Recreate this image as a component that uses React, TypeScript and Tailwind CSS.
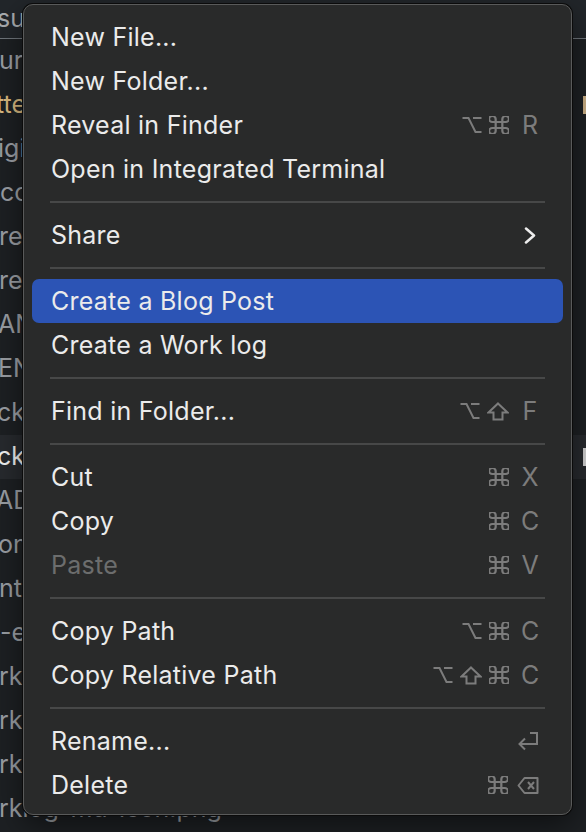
import React from "react";

const FONT = { fontFamily: "Inter, 'Noto Sans', sans-serif" };
const SC = "#7c7c7c";

function Opt() {
  return (
    <svg width="20" height="18" viewBox="0 0 20 18" fill="none" stroke={SC} strokeWidth="2" strokeLinecap="butt">
      <path d="M0.5 2 H6.5 L13.5 16 H19.5" />
      <path d="M11 2 H19.5" />
    </svg>
  );
}
function Cmd() {
  return (
    <svg width="20" height="18" viewBox="3 3 18 18" preserveAspectRatio="none" fill="none" stroke={SC} strokeWidth="2">
      <path d="M15 6v12a3 3 0 1 0 3-3H6a3 3 0 1 0 3 3V6a3 3 0 1 0-3 3h12a3 3 0 1 0-3-3" />
    </svg>
  );
}
function Shift() {
  return (
    <svg width="22" height="19" viewBox="0 0 22 19" fill="none" stroke={SC} strokeWidth="2" strokeLinejoin="miter">
      <path d="M11 1.5 L20.5 10.5 H15.5 V17.5 H6.5 V10.5 H1.5 Z" />
    </svg>
  );
}
function Ret() {
  return (
    <svg width="22" height="20" viewBox="0 0 22 20" fill="none" stroke={SC} strokeWidth="2">
      <path d="M13 2 H20 V13 H3" />
      <path d="M8 7.5 L2.5 13 L8 18.5" />
    </svg>
  );
}
function Bksp() {
  return (
    <svg width="22" height="19" viewBox="0 0 22 19" fill="none" stroke={SC} strokeWidth="2" strokeLinejoin="round" className="ml-[2px]">
      <path d="M7.5 2 H20.5 V17 H7.5 L1.5 9.5 Z" />
      <path d="M11 6 L17 13 M17 6 L11 13" />
    </svg>
  );
}
function Chevron() {
  return (
    <svg width="12" height="17" viewBox="0 0 12 17" fill="none" stroke="#ececec" strokeWidth="2.5" strokeLinecap="round" strokeLinejoin="round">
      <path d="M2 1.5 L10 8.5 L2 15.5" />
    </svg>
  );
}

type Key = "opt" | "cmd" | "shift" | "ret" | "bksp" | string;

function Shortcut({ keys }: { keys: Key[] }) {
  return (
    <div className="flex items-center gap-[7px]">
      {keys.map((k, i) => {
        if (k === "opt") return <Opt key={i} />;
        if (k === "cmd") return <Cmd key={i} />;
        if (k === "shift") return <Shift key={i} />;
        if (k === "ret") return <Ret key={i} />;
        if (k === "bksp") return <Bksp key={i} />;
        return (
          <span key={i} className="ml-[5px] text-[25px] leading-none text-[#7c7c7c] w-[18px] text-center">
            {k}
          </span>
        );
      })}
    </div>
  );
}

type Item =
  | { sep: true }
  | { label: string; keys?: Key[]; sub?: boolean; active?: boolean; disabled?: boolean };

const items: Item[] = [
  { label: "New File..." },
  { label: "New Folder..." },
  { label: "Reveal in Finder", keys: ["opt", "cmd", "R"] },
  { label: "Open in Integrated Terminal" },
  { sep: true },
  { label: "Share", sub: true },
  { sep: true },
  { label: "Create a Blog Post", active: true },
  { label: "Create a Work log" },
  { sep: true },
  { label: "Find in Folder...", keys: ["opt", "shift", "F"] },
  { sep: true },
  { label: "Cut", keys: ["cmd", "X"] },
  { label: "Copy", keys: ["cmd", "C"] },
  { label: "Paste", keys: ["cmd", "V"], disabled: true },
  { sep: true },
  { label: "Copy Path", keys: ["opt", "cmd", "C"] },
  { label: "Copy Relative Path", keys: ["opt", "shift", "cmd", "C"] },
  { sep: true },
  { label: "Rename...", keys: ["ret"] },
  { label: "Delete", keys: ["cmd", "bksp"] },
];

const rows: { t: string; color?: string; active?: boolean; badge?: string; off: number }[] = [
  { t: "ur", off: -1 },
  { t: "tte", color: "#d9b97f", badge: "#c9ae84", off: -4 },
  { t: "igi", off: -2 },
  { t: "co", off: 0 },
  { t: "re", off: -1 },
  { t: "re", off: -1 },
  { t: "AN", off: -2 },
  { t: "EN", off: -2 },
  { t: "cka", off: -3 },
  { t: "cka", color: "#f2f2f2", active: true, badge: "#cfcfcf", off: -3 },
  { t: "AD", off: -4 },
  { t: "on", off: -2 },
  { t: "nt.", off: -1 },
  { t: "-e", off: 0 },
  { t: "rkl", off: -1 },
  { t: "rkl", off: -1 },
  { t: "rkl", off: -1 },
  { t: "rklog-md-icon.png", off: -1 },
];

export default function App() {
  return (
    <div className="relative w-[586px] h-[832px] overflow-hidden bg-[#1d2023]" style={FONT}>
      {/* background explorer */}
      <div className="flex flex-col">
        <div className="h-[39px] flex items-center bg-[#22262a] border-b border-[#6f757b]">
          <span className="ml-[-3px] text-[25px] text-[#a9acaf] whitespace-nowrap">sui</span>
        </div>
        {rows.map((r, i) => (
          <div
            key={i}
            className={
              "h-[44px] flex items-center justify-between " + (r.active ? "bg-[#272a2e]" : "")
            }
          >
            <span
              className="text-[25px] whitespace-nowrap"
              style={{ marginLeft: r.off, color: r.color ?? "#9a9ea3" }}
            >
              {r.t}
            </span>
            {r.badge ? (
              <div className="w-[14px] h-[18px] mr-[-11px]" style={{ background: r.badge }} />
            ) : null}
          </div>
        ))}
      </div>

      {/* context menu */}
      <div className="absolute left-[23px] top-[4px] w-[549px] rounded-[10px] border border-[#595a5a] bg-[#292a2a] shadow-[0_0_0_1px_#0b0b0b,0_10px_30px_rgba(0,0,0,0.5)] pt-[10px] pb-[7px] px-[8px]">
        {items.map((it, i) => {
          if ("sep" in it) {
            return (
              <div key={i} className="h-[22px] flex items-center px-[18px]">
                <div className="h-[2px] w-full bg-[#474848]" />
              </div>
            );
          }
          return (
            <div
              key={i}
              className={
                "h-[44px] flex items-center justify-between pl-[19px] pr-[24px] rounded-[7px] " +
                (it.active ? "bg-[#2c54b5]" : "")
              }
            >
              <span
                className={
                  "text-[25px] tracking-[0.25px] leading-none whitespace-nowrap " +
                  (it.disabled ? "text-[#6c6d6d]" : "text-[#ebebeb]")
                }
              >
                {it.label}
              </span>
              {it.keys ? <Shortcut keys={it.keys} /> : null}
              {it.sub ? (
                <div className="mr-[3px]">
                  <Chevron />
                </div>
              ) : null}
            </div>
          );
        })}
      </div>
    </div>
  );
}
